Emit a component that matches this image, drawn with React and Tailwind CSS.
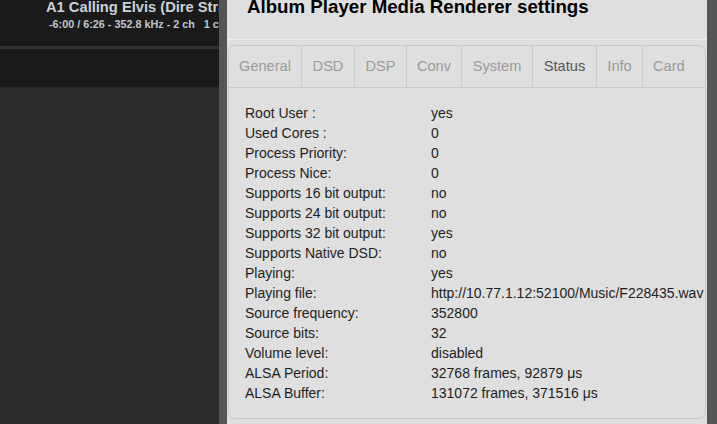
import React from 'react';

const tabs = [
  ['General', 'w-[73px]'],
  ['DSD', 'w-[53px]'],
  ['DSP', 'w-[52px]'],
  ['Conv', 'w-[55px]'],
  ['System', 'w-[71px]'],
  ['Status', 'w-[64px]'],
  ['Info', 'w-[46px]'],
  ['Card', 'px-[10px]'],
];

const rows = [
  ['Root User :', 'yes'],
  ['Used Cores :', '0'],
  ['Process Priority:', '0'],
  ['Process Nice:', '0'],
  ['Supports 16 bit output:', 'no'],
  ['Supports 24 bit output:', 'no'],
  ['Supports 32 bit output:', 'yes'],
  ['Supports Native DSD:', 'no'],
  ['Playing:', 'yes'],
  ['Playing file:', 'http://10.77.1.12:52100/Music/F228435.wav'],
  ['Source frequency:', '352800'],
  ['Source bits:', '32'],
  ['Volume level:', 'disabled'],
  ['ALSA Period:', '32768 frames, 92879 μs'],
  ['ALSA Buffer:', '131072 frames, 371516 μs'],
];

const App = () => {
  return (
    <div className="flex h-[424px] w-[717px] overflow-hidden font-['Liberation_Sans',Arial,sans-serif]">
      {/* Player behind the dialog */}
      <div className="flex w-[219px] shrink-0 flex-col bg-[#2a2a2a]">
        <div className="h-[46px] bg-[#1a1a1a] pl-[46px] whitespace-nowrap overflow-hidden">
          <div className="-mt-[3px] text-[14.7px] font-bold leading-[20px] text-[#c9d1d9]">A1 Calling Elvis (Dire Straits)</div>
          <div className="pl-[3px] text-[10.8px] font-bold leading-[14px] text-[#c0c8d0]">
            -6:00 / 6:26 - 352.8 kHz - 2 ch&nbsp;&nbsp;&nbsp;1 channel
          </div>
        </div>
        <div className="h-[3px] bg-[#333333]" />
        <div className="h-[38px] bg-[#1a1a1a]" />
      </div>
      <div className="w-[8px] shrink-0 bg-[#555555]" />

      {/* Settings dialog */}
      <div className="flex w-[480px] shrink-0 flex-col bg-[#dfdfdf]">
        <div className="h-[40px] shrink-0 border-b border-[#ececec] pl-[20px]">
          <h1 className="-mt-[4px] text-[18.7px] font-bold leading-[22px] text-black">Album Player Media Renderer settings</h1>
        </div>

        <div className="mx-[1px] mt-[5px] rounded-[7px] border border-[#cacaca] bg-[#dfdfdf]">
          {/* Tabs */}
          <div className="flex h-[42px] border-b border-[#cacaca]">
            {tabs.map(([t, size], i) => (
              <div
                key={t}
                className={`flex shrink-0 items-center justify-center whitespace-nowrap pt-[1px] text-[14.6px] ${size} ${
                  i < tabs.length - 1 ? 'border-r border-[#cacaca]' : ''
                } ${t === 'Status' ? 'text-[#555555]' : 'text-[#9a9a9a]'}`}
              >
                {t}
              </div>
            ))}
          </div>

          {/* Status table */}
          <div className="px-[16px] pt-[15px] pb-[15px]">
            {rows.map(([label, value]) => (
              <div key={label} className="flex h-[20px] items-center text-[14px] leading-[20px] text-[#1e1e1e] whitespace-nowrap">
                <div className="w-[186px] shrink-0">{label}</div>
                <div>{value}</div>
              </div>
            ))}
          </div>
        </div>
      </div>
      <div className="flex-1 bg-[#555555]" />
    </div>
  );
};

export default App;
